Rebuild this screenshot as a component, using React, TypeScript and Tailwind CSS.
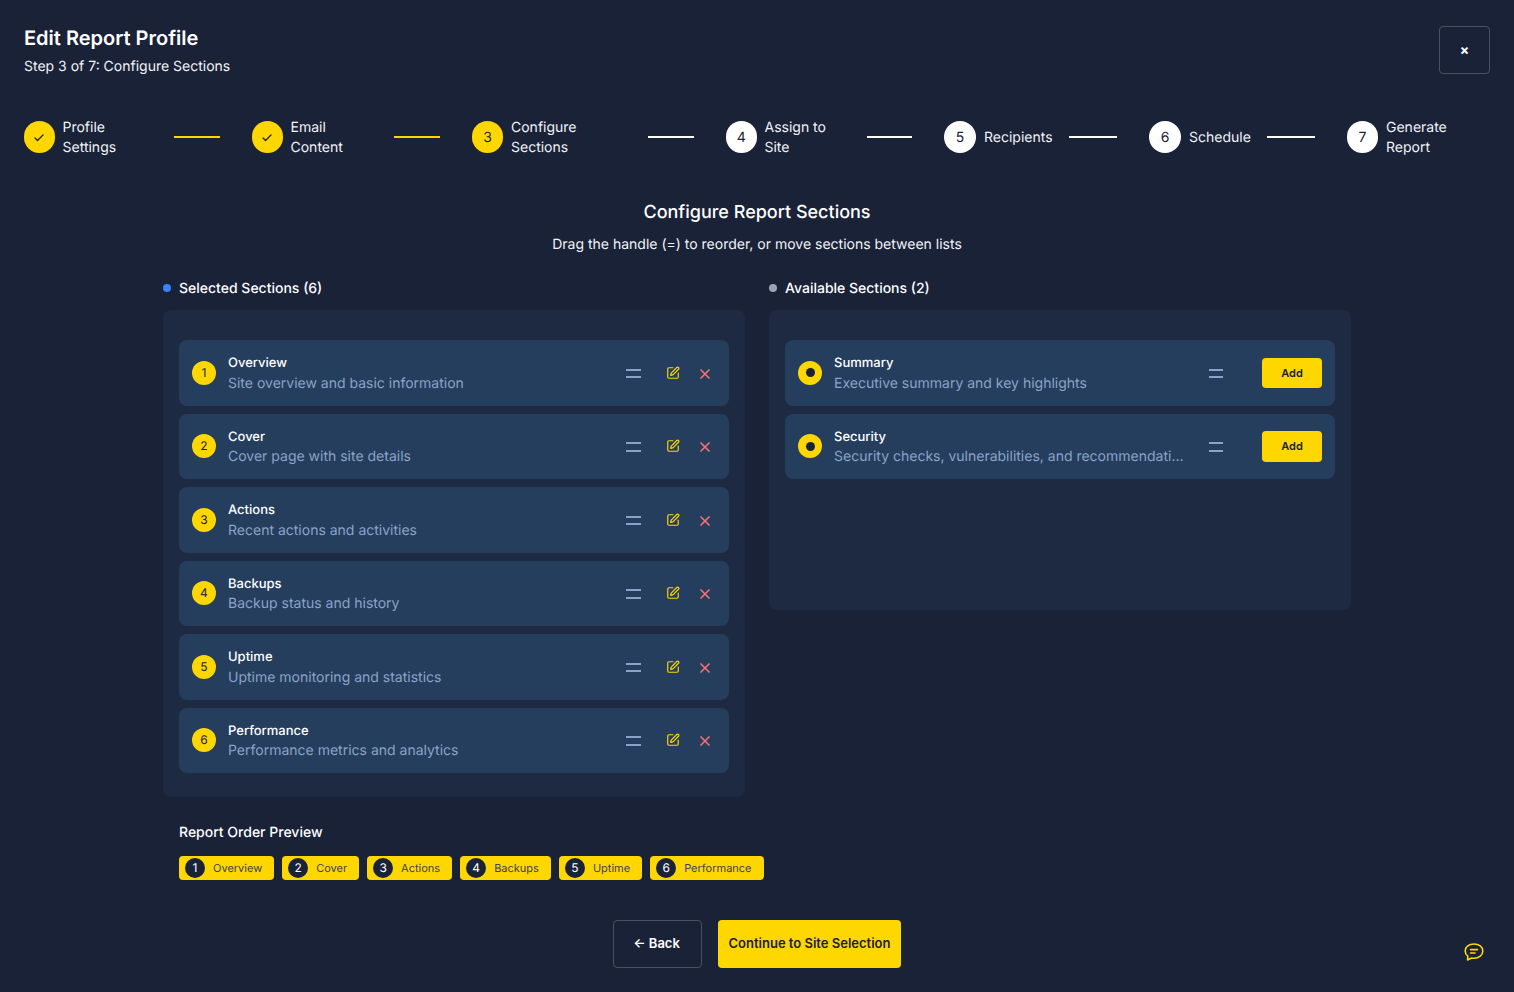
import { Check, SquarePen, X } from "lucide-react";

const steps = [
  { n: "1", label: ["Profile", "Settings"], w: "w-[134px]", line: "w-[46px]", c: "w-[30.5px]", done: true, on: true },
  { n: "2", label: ["Email", "Content"], w: "w-[126px]", line: "w-[46px]", c: "w-[30.5px]", done: true, on: true },
  { n: "3", label: ["Configure", "Sections"], w: "w-[160px]", line: "w-[46px]", c: "w-[31px]", done: false, on: true },
  { n: "4", label: ["Assign to", "Site"], w: "w-[125px]", line: "w-[45px]", c: "w-[30.5px]", done: false, on: false },
  { n: "5", label: ["Recipients"], w: "w-[109px]", line: "w-12", c: "w-8", done: false, on: false },
  { n: "6", label: ["Schedule"], w: "w-[102px]", line: "w-12", c: "w-8", done: false, on: false },
  { n: "7", label: ["Generate", "Report"], w: "w-[143px]", line: "", c: "w-[31px]", done: false, on: false },
];

const selected = [
  ["Overview", "Site overview and basic information"],
  ["Cover", "Cover page with site details"],
  ["Actions", "Recent actions and activities"],
  ["Backups", "Backup status and history"],
  ["Uptime", "Uptime monitoring and statistics"],
  ["Performance", "Performance metrics and analytics"],
];

const available = [
  ["Summary", "Executive summary and key highlights"],
  ["Security", "Security checks, vulnerabilities, and recommendations"],
];

function Handle() {
  return (
    <div className="mt-px flex w-[14.5px] flex-col gap-[5.5px]">
      <div className="h-[2px] bg-[#8ba3cb]" />
      <div className="h-[2px] bg-[#8ba3cb]" />
    </div>
  );
}

function Text({ title, desc }: { title: string; desc: string }) {
  return (
    <div className="min-w-0 flex-1">
      <div className="text-[13px] leading-[21px] font-medium text-white">{title}</div>
      <div className="truncate pt-[0.75px] text-sm leading-[17.75px] text-[#8ba3c7]">{desc}</div>
    </div>
  );
}

export default function App() {
  return (
    <div className="min-h-[992px] bg-[#1a2238] px-6 pt-6 font-['Inter',sans-serif] text-white [text-rendering:geometricPrecision]">
      <div className="flex items-start justify-between">
        <div>
          <h1 className="text-xl leading-7 font-semibold">Edit Report Profile</h1>
          <p className="mt-[5px] text-sm leading-5 text-[#f1f3f7]">Step 3 of 7: Configure Sections</p>
        </div>
        <button className="mt-[2px] flex h-12 w-[51px] items-center justify-center rounded border border-[#4a5160] pb-px text-sm font-bold">×</button>
      </div>

      <div className="mt-[40px] flex h-10 items-center">
        {steps.map((s, i) => (
          <div key={s.n} className="flex items-center">
            <div className={`flex items-center ${s.w}`}>
              <div className={`flex h-8 ${s.c} shrink-0 items-center justify-center rounded-full pt-px text-sm ${s.on ? "bg-[#ffd700]" : "bg-white"} text-[#1a2238]`}>
                {s.done ? <Check size={12} strokeWidth={2.5} /> : s.n}
              </div>
              <div className="ml-2 pt-[2px] text-sm leading-5 text-[#f1f3f7]">
                {s.label.map((l) => (
                  <div key={l}>{l}</div>
                ))}
              </div>
            </div>
            {i < 6 && <div className={`mr-8 ml-4 h-[2px] ${s.line} ${i < 2 ? "bg-[#ffd700]" : "bg-white"}`} />}
          </div>
        ))}
      </div>

      <div className="mx-auto mt-[42px] w-[1188px]">
        <h2 className="text-center text-lg leading-7 font-medium">Configure Report Sections</h2>
        <p className="mt-2 text-center text-sm leading-5 text-[#f1f3f7]">Drag the handle (=) to reorder, or move sections between lists</p>

        <div className="mt-[23px] grid grid-cols-2 items-start gap-6">
          <div>
            <div className="flex h-5 items-center text-sm font-medium">
              <span className="mr-2 h-2 w-2 rounded-full bg-[#3b82f6]" />
              <span className="pt-[2px]">Selected Sections (6)</span>
            </div>
            <div className="mt-3 flex flex-col gap-2 rounded-lg bg-[#1e2a42] px-4 pt-[30px] pb-6">
              {selected.map(([t, d], i) => (
                <div key={t} className="flex h-[65.5px] items-center rounded-lg bg-[#253e5e] pr-[16px] pl-[13px]">
                  <div className="mr-3 flex h-6 w-6 shrink-0 items-center justify-center rounded-full bg-[#ffd700] text-xs text-[#1a2238]">{i + 1}</div>
                  <Text title={t} desc={d} />
                  <Handle />
                  <SquarePen size={14} strokeWidth={2} className="ml-[25.5px] text-[#ffd700]" />
                  <X size={16} strokeWidth={2.5} className="mt-[2px] ml-[17px] text-[#f87171]" />
                </div>
              ))}
            </div>
          </div>

          <div>
            <div className="flex h-5 items-center text-sm font-medium">
              <span className="mr-2 h-2 w-2 rounded-full bg-[#9ca3af]" />
              <span className="pt-[2px]">Available Sections (2)</span>
            </div>
            <div className="mt-3 flex min-h-[300px] flex-col gap-2 rounded-lg bg-[#1e2a42] px-4 pt-[30px] pb-6">
              {available.map(([t, d]) => (
                <div key={t} className="flex h-[65.5px] items-center rounded-lg bg-[#253e5e] pr-[13px] pl-[13px]">
                  <div className="mr-3 flex h-6 w-6 shrink-0 items-center justify-center rounded-full bg-[#ffd700]">
                    <div className="h-[9px] w-[9px] rounded-full bg-[#1a2238]" />
                  </div>
                  <div className="w-[350px]">
                    <Text title={t} desc={d} />
                  </div>
                  <div className="ml-[24.5px]">
                    <Handle />
                  </div>
                  <button className="ml-auto flex h-[30.5px] w-[60px] items-center justify-center rounded bg-[#ffd700] text-[11px] font-semibold text-[#1a2238]">Add</button>
                </div>
              ))}
            </div>
          </div>
        </div>

        <div className="mt-[26px] pl-4">
          <div className="text-sm leading-5 font-medium">Report Order Preview</div>
          <div className="mt-[13px] flex gap-2">
            {selected.map(([t], i) => (
              <div key={t} className="flex h-6 items-center rounded bg-[#ffd700] pr-3 pl-[6px] text-[11px] text-[#3a4256]">
                <span className="mr-2 flex h-5 w-5 items-center justify-center rounded-full bg-[#1a2238] text-xs text-white">{i + 1}</span>
                {t}
              </div>
            ))}
          </div>
        </div>

        <div className="mt-10 flex justify-center gap-4">
          <button className="flex h-12 w-[89px] items-center justify-center rounded border border-[#4a5160] pr-[2px] text-[13px] font-semibold">← Back</button>
          <button className="flex h-12 w-[183px] items-center justify-center rounded bg-[#ffd700] text-[13px] font-semibold text-[#1a2238]">Continue to Site Selection</button>
        </div>
      </div>

      <svg className="absolute top-[942px] left-[1464px]" width="20" height="20" viewBox="0 0 20 20" fill="none" stroke="#ffd700" strokeWidth="1.6" strokeLinecap="round" strokeLinejoin="round">
        <path d="M10 2C5 2 1.2 4.8 1.2 9c0 2.2 1 4 2.6 5.2L3.6 18l4-2c.8.2 1.6.2 2.4.2 5 0 8.8-3 8.8-7.2S15 2 10 2Z" />
        <path d="M6.5 7.6h7M6.5 11h4.5" />
      </svg>
    </div>
  );
}
